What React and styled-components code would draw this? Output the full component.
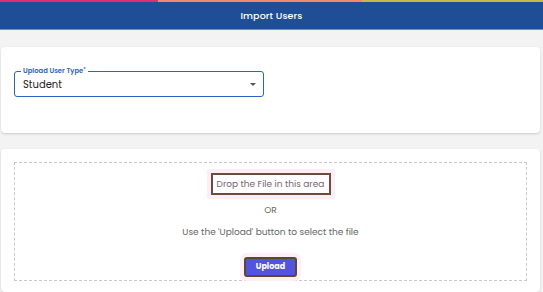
import React from "react";
import styled, { createGlobalStyle } from "styled-components";

const Global = createGlobalStyle`
  html, body { margin: 0; padding: 0; background: #f3f3f3; }
  body { font-family: "Poppins", Inter, "Open Sans", sans-serif; overflow: hidden; }
  * { box-sizing: border-box; }
`;

const Page = styled.div`
  width: 543px;
  height: 292px;
  display: flex;
  flex-direction: column;
  background: #f3f3f3;
`;

const Stripe = styled.div`
  height: 2px;
  display: grid;
  grid-template-columns: 158px 204px 1fr;
`;

const StripePart = styled.div`
  background: ${(p) => p.$c};
`;

const Header = styled.header`
  height: 28px;
  background: #1f4e97;
  border-bottom: 1px solid #6f8fc4;
  display: flex;
  align-items: center;
  justify-content: center;
  color: #ffffff;
  font-size: 9.5px;
  font-weight: 500;
  letter-spacing: 0.1px;
`;

const Content = styled.main`
  flex: 1;
  display: flex;
  flex-direction: column;
  gap: 16px;
  padding: 17px 3px 0 1px;
`;

const Card = styled.section`
  background: #ffffff;
  border-radius: 4px;
  box-shadow: 0 1px 3px rgba(0, 0, 0, 0.12), 0 1px 1px rgba(0, 0, 0, 0.05);
  padding: ${(p) => p.$pad};
  flex: ${(p) => (p.$grow ? 1 : "none")};
`;

const Field = styled.fieldset`
  position: relative;
  margin: 0;
  width: 250px;
  height: 26px;
  border: 1.5px solid #2f63c0;
  border-radius: 3px;
  padding: 0 8px;
  display: flex;
  align-items: center;
  justify-content: space-between;
`;

const Legend = styled.span`
  position: absolute;
  top: -5px;
  left: 6px;
  padding: 0 2px;
  background: #ffffff;
  color: #2f63c0;
  font-size: 6.8px;
  font-weight: 600;
  line-height: 8px;
`;

const Star = styled.sup`
  font-size: 5px;
  vertical-align: top;
  line-height: 6px;
`;

const Value = styled.span`
  font-size: 10px;
  color: #222;
  padding-top: 2px;
`;

const Caret = styled.span`
  width: 0;
  height: 0;
  border-left: 3px solid transparent;
  border-right: 3px solid transparent;
  border-top: 3px solid #555;
  margin-right: -1px;
`;

const DropZone = styled.div`
  border: 1px dashed #c9c9c9;
  height: 119px;
  display: flex;
  flex-direction: column;
  align-items: center;
  padding-top: 10px;
`;

const DropLabel = styled.div`
  width: 120px;
  height: 22px;
  border: 2px solid #6e4c3c;
  box-shadow: 0 0 0 4px #fdeef6;
  display: flex;
  align-items: center;
  justify-content: center;
  color: #7a6670;
  font-size: 9px;
  white-space: nowrap;
`;

const Line = styled.div`
  font-size: 9px;
  color: #666;
  margin-top: ${(p) => p.$mt}px;
  line-height: 12px;
  white-space: nowrap;
`;

const UploadButton = styled.button`
  margin-top: 19px;
  width: 53px;
  height: 20px;
  border: 2px solid #5a4a2a;
  border-radius: 3px;
  background: #5253e3;
  color: #ffffff;
  font-family: inherit;
  font-size: 8px;
  font-weight: 700;
  box-shadow: 0 0 0 4px #fdeef8;
  padding: 0;
`;

export default function App() {
  return (
    <Page>
      <Global />
      <Stripe>
        <StripePart $c="#e0306a" />
        <StripePart $c="#f08a6a" />
        <StripePart $c="#c9b84a" />
      </Stripe>
      <Header>Import Users</Header>
      <Content>
        <Card $pad="24px 13px 36px">
          <Field>
            <Legend>
              Upload User Type<Star>*</Star>
            </Legend>
            <Value>Student</Value>
            <Caret />
          </Field>
        </Card>
        <Card $pad="13px 13px 0" $grow>
          <DropZone>
            <DropLabel>Drop the File in this area</DropLabel>
            <Line $mt={9}>OR</Line>
            <Line $mt={10}>Use the 'Upload' button to select the file</Line>
            <UploadButton>Upload</UploadButton>
          </DropZone>
        </Card>
      </Content>
    </Page>
  );
}
